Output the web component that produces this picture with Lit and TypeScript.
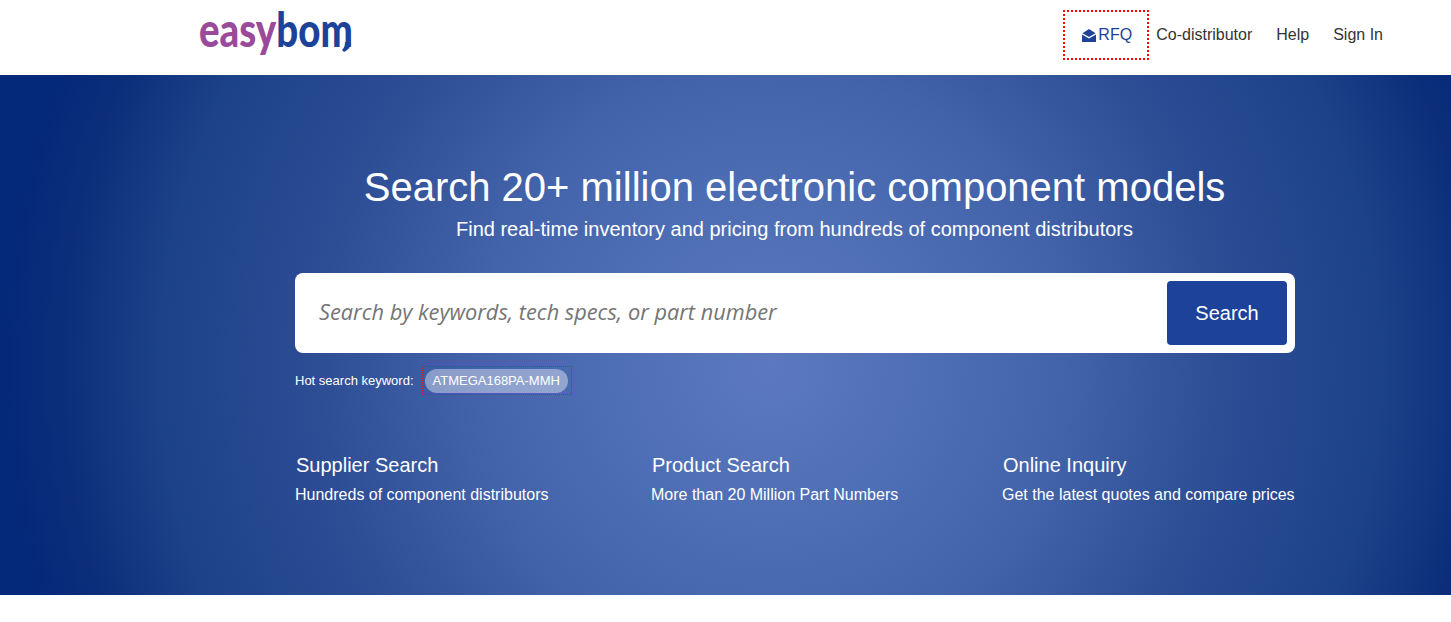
import { LitElement, html, css } from 'lit';
import { customElement } from 'lit/decorators.js';

const features = [
  { title: 'Supplier Search', text: 'Hundreds of component distributors', width: 356 },
  { title: 'Product Search', text: 'More than 20 Million Part Numbers', width: 351 },
  { title: 'Online Inquiry', text: 'Get the latest quotes and compare prices', width: 293 },
];

@customElement('app-root')
export class AppRoot extends LitElement {
  static styles = css`
    :host {
      display: block;
      height: 622px;
      background: #fff;
      font-family: 'Liberation Sans', Arial, sans-serif;
      overflow: hidden;
    }
    .header {
      height: 75px;
      display: flex;
      justify-content: space-between;
      align-items: center;
      padding: 0 68px 5px 199px;
      box-sizing: border-box;
    }
    .brand {
      position: relative;
      width: 152px;
      height: 56px;
      margin-bottom: 12px;
    }
    .logo {
      width: max-content;
      font-family: 'Lato', sans-serif;
      font-weight: 900;
      font-size: 48px;
      line-height: 56px;
      color: #9a4a9b;
      transform: scaleX(0.8);
      transform-origin: left center;
      white-space: nowrap;
    }
    .logo span {
      color: #1c4399;
    }
    .tail {
      position: absolute;
      left: 140px;
      top: 41px;
      width: 12px;
      height: 10px;
    }
    .nav {
      display: flex;
      align-items: center;
      font-size: 16px;
      color: #333;
    }
    .nav a {
      margin-left: 24px;
    }
    .nav .rfq {
      margin: 0 7px 0 0;
      width: 86px;
      height: 50px;
      box-sizing: border-box;
      border: 2px dotted #f00;
      padding-left: 2px;
      display: flex;
      align-items: center;
      justify-content: center;
      color: #1c4399;
      gap: 2px;
    }
    .nav .first {
      margin-left: 0;
    }
    .rfq svg {
      width: 14px;
      height: 13px;
      flex: none;
    }
    .hero {
      height: 520px;
      box-sizing: border-box;
      background: radial-gradient(
        circle 770px at 770px 290px,
        #5c79bf 0,
        #4869b0 225px,
        #4363ab 290px,
        #2d4d95 450px,
        #1c4289 611px,
        #0c2e7a 710px,
        #04287a 770px
      );
      color: #fff;
      display: flex;
      flex-direction: column;
      align-items: center;
      padding-top: 88px;
    }
    h1 {
      margin: 0 0 0 138px;
      font-weight: 400;
      font-size: 40px;
      line-height: 48px;
      width: 1000px;
      text-align: center;
    }
    .sub {
      font-size: 20px;
      line-height: 30px;
      margin: 3px 0 0 138px;
    }
    .wrap {
      width: 1000px;
      margin-left: 139px;
    }
    .search {
      margin-top: 29px;
      height: 80px;
      background: #fff;
      border-radius: 8px;
      display: flex;
      align-items: center;
      padding: 0 8px 0 24px;
      box-sizing: border-box;
    }
    .placeholder {
      flex: 1;
      font-family: 'Open Sans', sans-serif;
      font-style: italic;
      font-size: 21.75px;
      color: #757575;
      padding-bottom: 4px;
    }
    .btn {
      width: 120px;
      height: 64px;
      background: #1c4399;
      border-radius: 4px;
      color: #fff;
      font-size: 20px;
      display: flex;
      align-items: center;
      justify-content: center;
    }
    .hot {
      display: flex;
      align-items: center;
      margin-top: 14px;
      font-size: 13px;
    }
    .hot .label {
      margin-right: 9px;
    }
    .kw {
      outline: 1px dotted #e0102a;
      padding: 2px 3px 1px 2px;
    }
    .pill {
      display: block;
      background: rgba(255, 255, 255, 0.4);
      border-radius: 12px;
      padding: 0 8px;
      line-height: 24px;
      color: #fff;
    }
    .features {
      display: flex;
      margin-top: 59px;
    }
    .title {
      font-size: 20px;
      line-height: 24px;
      padding-left: 1px;
    }
    .text {
      font-size: 16px;
      line-height: 24px;
      margin-top: 6px;
      white-space: nowrap;
    }
  `;

  render() {
    return html`
      <div class="header">
        <div class="brand">
          <div class="logo">easy<span>bom</span></div>
          <svg class="tail" viewBox="0 0 12 10"><path fill="#1c4399" d="M6 0h6c0 5-3 8-7 10L3 8c2-2 3-4 3-8z"/></svg>
        </div>
        <div class="nav">
          <a class="rfq">
            <svg viewBox="0 0 14 13"><path fill="#1c4399" d="M7 0 13.5 4.2 7 8 .5 4.2zM0 5.6 7 9.6 14 5.6V13H0z"/></svg>
            RFQ
          </a>
          <a class="first">Co-distributor</a>
          <a>Help</a>
          <a>Sign In</a>
        </div>
      </div>
      <div class="hero">
        <h1>Search 20+ million electronic component models</h1>
        <div class="sub">Find real-time inventory and pricing from hundreds of component distributors</div>
        <div class="wrap">
          <div class="search">
            <div class="placeholder">Search by keywords, tech specs, or part number</div>
            <div class="btn">Search</div>
          </div>
          <div class="hot">
            <span class="label">Hot search keyword:</span>
            <span class="kw"><span class="pill">ATMEGA168PA-MMH</span></span>
          </div>
          <div class="features">
            ${features.map(
              (f) => html`<div style="width:${f.width}px">
                <div class="title">${f.title}</div>
                <div class="text">${f.text}</div>
              </div>`
            )}
          </div>
        </div>
      </div>
    `;
  }
}
